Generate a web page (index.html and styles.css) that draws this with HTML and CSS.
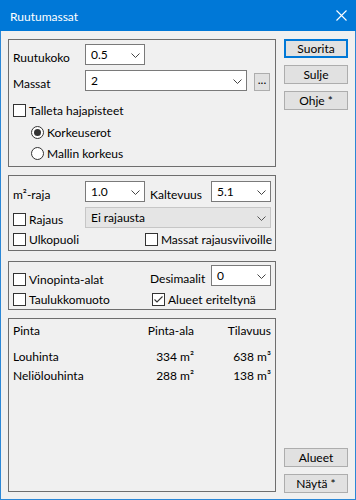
FILE: index.html
```html
<!DOCTYPE html>
<html lang="fi">
<head>
    <meta charset="UTF-8">
    <meta name="viewport" content="width=device-width, initial-scale=1.0">
    <title>Ruutumassat</title>
    <link rel="stylesheet" href="styles.css">
</head>
<body>
<div class="window">
    <div class="titlebar">
        <span class="title">Ruutumassat</span>
        <svg class="close" width="11" height="11" viewBox="0 0 11 11">
            <path d="M0.5 0.5 L10.5 10.5 M10.5 0.5 L0.5 10.5" stroke="#fff" stroke-width="1.1" fill="none"/>
        </svg>
    </div>

    <div class="content">
        <div class="main">
            <!-- grid size and masses -->
            <div class="group g1">
                <div class="row r1">
                    <span class="label">Ruutukoko</span>
                    <div class="combo w60"><span>0.5</span><svg class="chev" width="9" height="5" viewBox="0 0 9 5"><path d="M0.5 0.5 L4.5 4.5 L8.5 0.5" stroke="#444" fill="none"/></svg></div>
                </div>
                <div class="row r2">
                    <span class="label">Massat</span>
                    <div class="combo w162"><span>2</span><svg class="chev" width="9" height="5" viewBox="0 0 9 5"><path d="M0.5 0.5 L4.5 4.5 L8.5 0.5" stroke="#444" fill="none"/></svg></div>
                    <button class="dots">...</button>
                </div>
                <div class="row r3">
                    <span class="check"></span><span class="cap">Talleta hajapisteet</span>
                </div>
                <div class="row radio-row first">
                    <span class="radio on"></span><span class="cap">Korkeuserot</span>
                </div>
                <div class="row radio-row">
                    <span class="radio"></span><span class="cap">Mallin korkeus</span>
                </div>
            </div>

            <!-- area limit and slope -->
            <div class="group g2">
                <div class="row">
                    <span class="label">m²-raja</span>
                    <div class="combo w60"><span>1.0</span><svg class="chev" width="9" height="5" viewBox="0 0 9 5"><path d="M0.5 0.5 L4.5 4.5 L8.5 0.5" stroke="#444" fill="none"/></svg></div>
                    <span class="label mid">Kaltevuus</span>
                    <div class="combo w60"><span>5.1</span><svg class="chev" width="9" height="5" viewBox="0 0 9 5"><path d="M0.5 0.5 L4.5 4.5 L8.5 0.5" stroke="#444" fill="none"/></svg></div>
                </div>
                <div class="row r-limit">
                    <div class="opt wide"><span class="check"></span><span class="cap">Rajaus</span></div>
                    <div class="combo disabled w186"><span>Ei rajausta</span><svg class="chev" width="9" height="5" viewBox="0 0 9 5"><path d="M0.5 0.5 L4.5 4.5 L8.5 0.5" stroke="#555" fill="none"/></svg></div>
                </div>
                <div class="row r-out">
                    <div class="opt half"><span class="check"></span><span class="cap">Ulkopuoli</span></div>
                    <div class="opt"><span class="check"></span><span class="cap">Massat rajausviivoille</span></div>
                </div>
            </div>

            <!-- output options -->
            <div class="group g3">
                <div class="row r-dec">
                    <div class="opt half-short low"><span class="check"></span><span class="cap">Vinopinta-alat</span></div>
                    <span class="label dec">Desimaalit</span>
                    <div class="combo w60"><span>0</span><svg class="chev" width="9" height="5" viewBox="0 0 9 5"><path d="M0.5 0.5 L4.5 4.5 L8.5 0.5" stroke="#444" fill="none"/></svg></div>
                </div>
                <div class="row r-table">
                    <div class="opt half"><span class="check"></span><span class="cap">Taulukkomuoto</span></div>
                    <div class="opt"><span class="check checked"><svg width="11" height="11" viewBox="0 0 11 11"><path d="M1.5 5.5 L4 8 L9.5 2.5" stroke="#333" stroke-width="1.1" fill="none"/></svg></span><span class="cap">Alueet eriteltynä</span></div>
                </div>
            </div>

            <!-- results -->
            <div class="group g4">
                <div class="results">
                    <span class="head">Pinta</span><span class="num head">Pinta-ala</span><span class="num head">Tilavuus</span>
                    <span>Louhinta</span><span class="num">334 m²</span><span class="num">638 m³</span>
                    <span>Neliölouhinta</span><span class="num">288 m²</span><span class="num">138 m³</span>
                </div>
            </div>
        </div>

        <div class="side">
            <button class="btn default">Suorita</button>
            <button class="btn">Sulje</button>
            <button class="btn">Ohje *</button>
            <div class="spacer"></div>
            <button class="btn">Alueet</button>
            <button class="btn">Näytä *</button>
        </div>
    </div>
</div>
</body>
</html>
```

FILE: styles.css
```css
* {
    box-sizing: border-box;
}

body {
    margin: 0;
    font-family: Lato, "Liberation Sans", sans-serif;
    font-size: 12px;
    color: #000;
    background: #fff;
}

.window {
    width: 356px;
    height: 500px;
    background: #f0f0f0;
    border: 1px solid #2b87d6;
    border-top: none;
    display: flex;
    flex-direction: column;
}

.titlebar {
    height: 31px;
    margin: 0 -1px;
    background: #0078d7;
    color: #fff;
    display: flex;
    align-items: center;
    justify-content: space-between;
    padding: 0 10px 0 10px;
}

.title {
    font-size: 12px;
    padding-top: 1px;
}

.close {
    display: block;
    margin-right: -1px;
}

.content {
    flex: 1;
    display: flex;
    padding: 8px 7px 6px 7px;
    gap: 8px;
}

.main {
    width: 268px;
    display: flex;
    flex-direction: column;
}

.group {
    border: 1px solid #6e6e6e;
    padding: 0 3px 0 4px;
}

.g1 {
    height: 128px;
    padding-top: 4px;
}

.g2 {
    height: 76px;
    margin-top: 8px;
    padding-top: 5px;
}

.g3 {
    height: 49px;
    margin-top: 10px;
    padding-top: 3px;
}

.g4 {
    height: 174px;
    margin-top: 8px;
    padding-top: 2px;
}

.row {
    display: flex;
    align-items: center;
    height: 21px;
}

.r2 {
    margin-top: 5px;
}

.r3 {
    margin-top: 9px;
}

.radio-row {
    padding-left: 18px;
}

.radio-row.first {
    margin-top: 1px;
}

.label {
    width: 72px;
    padding-top: 6px;
    white-space: nowrap;
}

.label.mid {
    width: 61px;
    margin-left: 5px;
}

.label.dec {
    width: 61px;
    margin-left: 0;
}

.combo {
    height: 21px;
    border: 1px solid #7a7a7a;
    background: #fff;
    display: flex;
    align-items: center;
    justify-content: space-between;
    padding: 0 4px 0 5px;
}

.combo span {
    padding-bottom: 1px;
}

.combo.disabled {
    background: #e5e5e5;
    border-color: #c6c6c6;
}

.chev {
    display: block;
    margin-top: 1px;
}

.w60 {
    width: 60px;
}

.w162 {
    width: 162px;
}

.w186 {
    width: 186px;
}

.dots {
    width: 16px;
    height: 18px;
    margin-left: 7px;
    margin-top: 2px;
    padding: 0 0 4px 0;
    border: 1px solid #adadad;
    background: #e1e1e1;
    font-family: inherit;
    font-size: 12px;
    line-height: 10px;
    color: #000;
}

.check {
    width: 13px;
    height: 13px;
    border: 1px solid #333;
    background: #fff;
    flex: none;
    display: flex;
    align-items: center;
    justify-content: center;
}

.check svg {
    display: block;
}

.radio {
    width: 13px;
    height: 13px;
    border: 1px solid #333;
    border-radius: 50%;
    background: #fff;
    flex: none;
    position: relative;
}

.radio.on::after {
    content: "";
    position: absolute;
    left: 2px;
    top: 2px;
    width: 7px;
    height: 7px;
    border-radius: 50%;
    background: #333;
}

.cap {
    margin-left: 3px;
    white-space: nowrap;
}

.opt {
    display: flex;
    align-items: center;
}

.opt.wide {
    width: 72px;
    margin-top: 4px;
}

.opt.half {
    width: 139px;
}

.opt.half-short {
    width: 137px;
}

.opt.low {
    margin-top: 8px;
}

.r-limit {
    margin-top: 5px;
}

.r-out {
    margin-top: 1px;
}

.r-table {
    margin-top: 5px;
    height: 17px;
}

.results {
    display: grid;
    grid-template-columns: 1fr 53px 77px;
    line-height: 19px;
    padding-right: 1px;
}

.results .head {
    margin-bottom: 7px;
}

.results .num {
    text-align: right;
    white-space: nowrap;
}

.side {
    width: 64px;
    display: flex;
    flex-direction: column;
}

.btn {
    width: 64px;
    height: 19px;
    margin-bottom: 7px;
    border: 1px solid #adadad;
    background: #e1e1e1;
    font-family: inherit;
    font-size: 12px;
    color: #000;
    padding: 0;
}

.btn.default {
    border: 2px solid #0078d7;
}

.spacer {
    flex: 1;
}

.btn:last-child {
    margin-bottom: 0;
}
```
